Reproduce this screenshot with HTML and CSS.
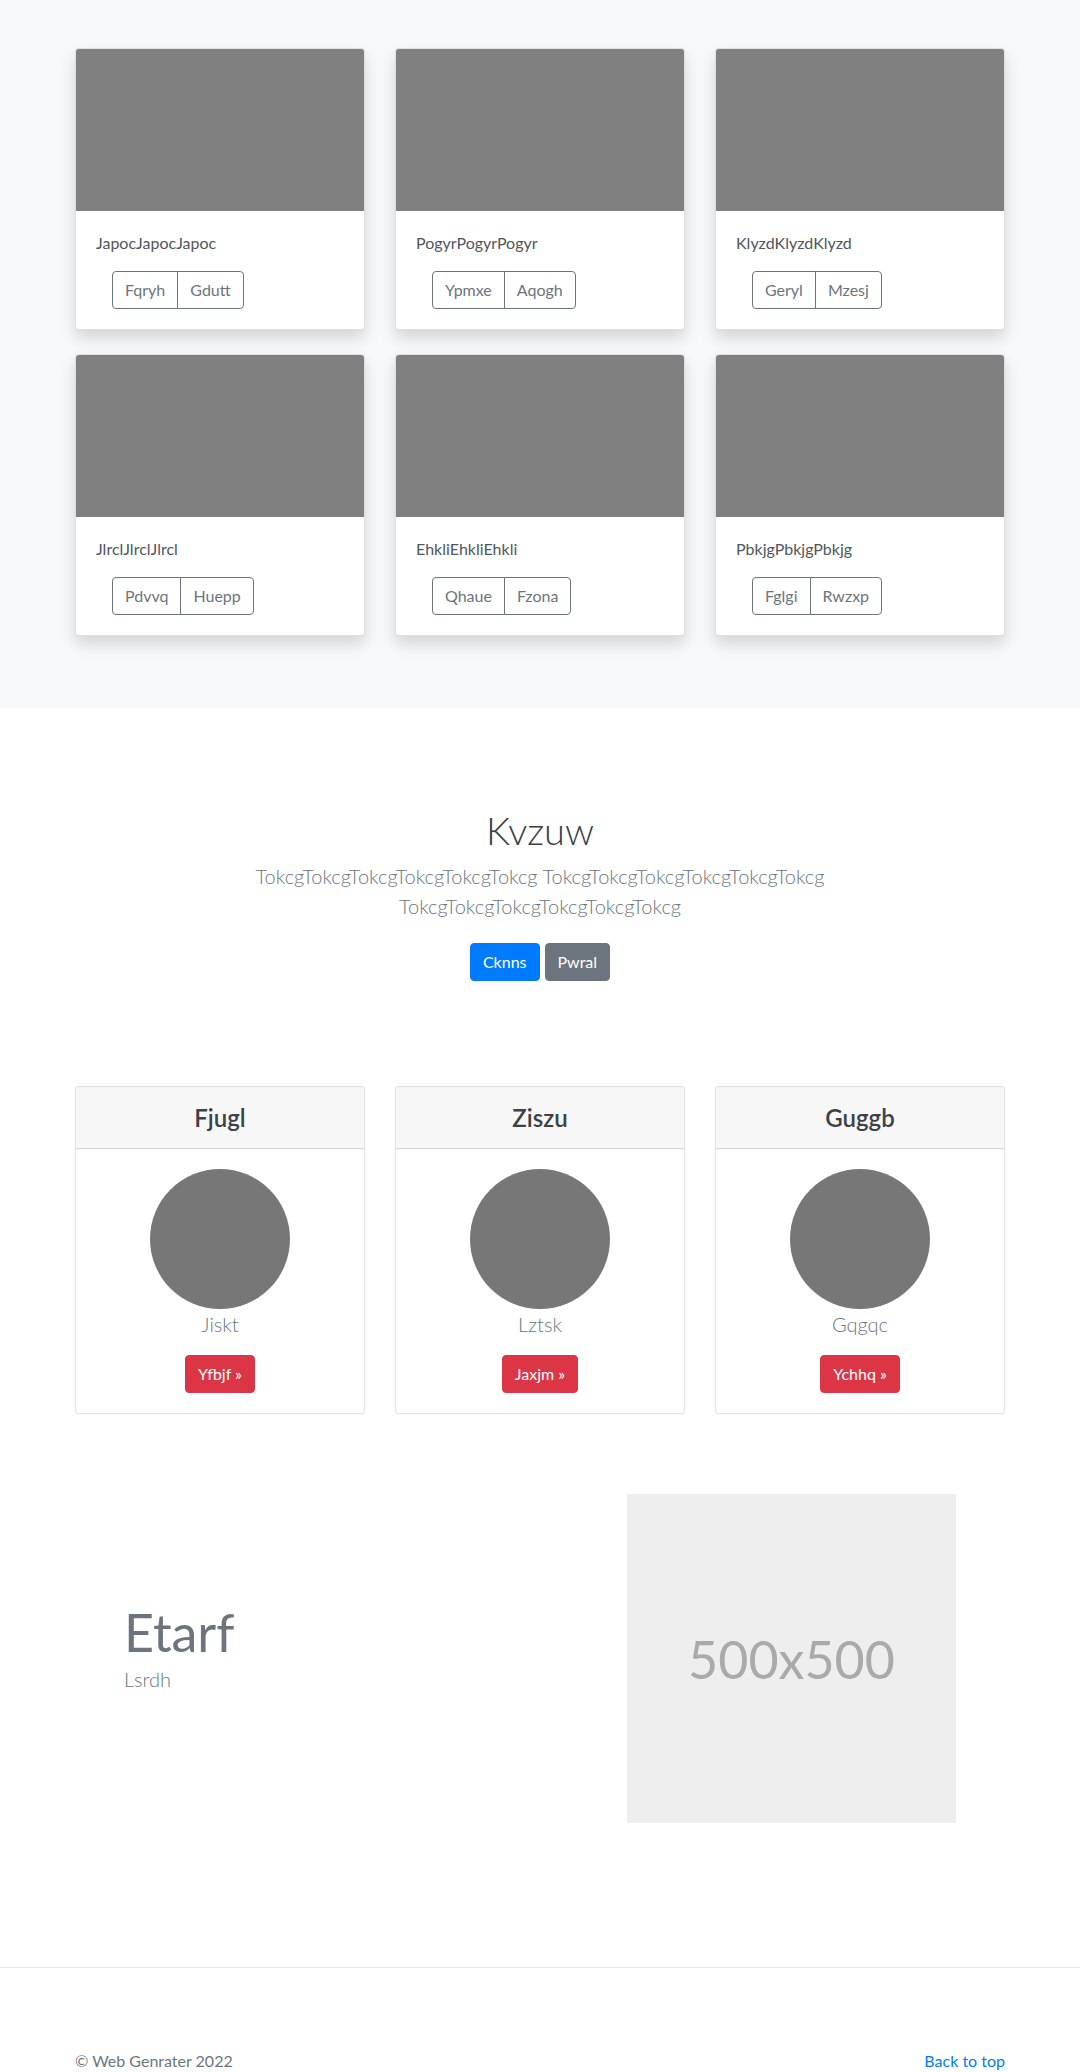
FILE: index.html
```html
<!DOCTYPE html>
<html lang="en">
<head>
<meta charset="utf-8">
<title>Album</title>
<link rel="stylesheet" href="styles.css">
</head>
<body>
<main>
  <section class="album">
    <div class="container grid3 album-grid">
      <div class="card shadow-card">
        <div class="card-img"></div>
        <div class="card-body">
          <p class="card-text">JapocJapocJapoc</p>
          <div class="btn-group"><span class="btn btn-outline">Fqryh</span><span class="btn btn-outline">Gdutt</span></div>
        </div>
      </div>
      <div class="card shadow-card">
        <div class="card-img"></div>
        <div class="card-body">
          <p class="card-text">PogyrPogyrPogyr</p>
          <div class="btn-group"><span class="btn btn-outline">Ypmxe</span><span class="btn btn-outline">Aqogh</span></div>
        </div>
      </div>
      <div class="card shadow-card">
        <div class="card-img"></div>
        <div class="card-body">
          <p class="card-text">KlyzdKlyzdKlyzd</p>
          <div class="btn-group"><span class="btn btn-outline">Geryl</span><span class="btn btn-outline">Mzesj</span></div>
        </div>
      </div>
      <div class="card shadow-card">
        <div class="card-img"></div>
        <div class="card-body">
          <p class="card-text">JlrclJlrclJlrcl</p>
          <div class="btn-group"><span class="btn btn-outline">Pdvvq</span><span class="btn btn-outline">Huepp</span></div>
        </div>
      </div>
      <div class="card shadow-card">
        <div class="card-img"></div>
        <div class="card-body">
          <p class="card-text">EhkliEhkliEhkli</p>
          <div class="btn-group"><span class="btn btn-outline">Qhaue</span><span class="btn btn-outline">Fzona</span></div>
        </div>
      </div>
      <div class="card shadow-card">
        <div class="card-img"></div>
        <div class="card-body">
          <p class="card-text">PbkjgPbkjgPbkjg</p>
          <div class="btn-group"><span class="btn btn-outline">Fglgi</span><span class="btn btn-outline">Rwzxp</span></div>
        </div>
      </div>
    </div>
  </section>

  <section class="hero">
    <h1 class="hero-title">Kvzuw</h1>
    <p class="lead hero-lead">TokcgTokcgTokcgTokcgTokcgTokcg TokcgTokcgTokcgTokcgTokcgTokcg TokcgTokcgTokcgTokcgTokcgTokcg</p>
    <div class="hero-actions">
      <a class="btn btn-primary" href="#">Cknns</a>
      <a class="btn btn-secondary" href="#">Pwral</a>
    </div>
  </section>

  <section class="pricing">
    <div class="container grid3">
      <div class="card">
        <div class="card-header"><h4 class="card-title">Fjugl</h4></div>
        <div class="card-body center">
          <div class="avatar"></div>
          <p class="person">Jiskt</p>
          <a class="btn btn-danger" href="#">Yfbjf &raquo;</a>
        </div>
      </div>
      <div class="card">
        <div class="card-header"><h4 class="card-title">Ziszu</h4></div>
        <div class="card-body center">
          <div class="avatar"></div>
          <p class="person">Lztsk</p>
          <a class="btn btn-danger" href="#">Jaxjm &raquo;</a>
        </div>
      </div>
      <div class="card">
        <div class="card-header"><h4 class="card-title">Guggb</h4></div>
        <div class="card-body center">
          <div class="avatar"></div>
          <p class="person">Gqgqc</p>
          <a class="btn btn-danger" href="#">Ychhq &raquo;</a>
        </div>
      </div>
    </div>
  </section>

  <section class="featurette">
    <div class="container feat-row">
      <div class="feat-text">
        <h2 class="feat-title">Etarf</h2>
        <p class="lead feat-lead">Lsrdh</p>
      </div>
      <div class="feat-media">
        <div class="placeholder">500x500</div>
      </div>
    </div>
  </section>
</main>

<footer class="footer">
  <div class="container footer-row">
    <p class="footer-copy">&copy; Web Genrater 2022</p>
    <a class="footer-link" href="#">Back to top</a>
  </div>
</footer>
</body>
</html>
```

FILE: styles.css
```css
* { box-sizing: border-box; }

html, body {
  margin: 0;
  padding: 0;
}

body {
  font-family: "Lato", "Noto Sans", "Liberation Sans", sans-serif;
  font-size: 16px;
  line-height: 1.5;
  color: #212529;
  background: #fff;
}

a { text-decoration: none; }

.container {
  width: 960px;
  margin: 0 auto;
  padding: 0 15px;
}

.grid3 {
  display: grid;
  grid-template-columns: repeat(3, 290px);
  column-gap: 30px;
}

/* ---------- album ---------- */
.album {
  background: #f8f9fa;
  padding: 48px 0 48px;
}

.album-grid {
  row-gap: 0;
}

.card {
  background: #fff;
  border: 1px solid rgba(0, 0, 0, 0.125);
  border-radius: 4px;
  display: flex;
  flex-direction: column;
}

.shadow-card {
  margin-bottom: 24px;
  box-shadow: 0 8px 16px rgba(0, 0, 0, 0.15);
}

.card-img {
  height: 162px;
  background: #808080;
  border-radius: 3px 3px 0 0;
}

.card-body {
  padding: 20px;
}

.card-text {
  margin: 0 0 16px;
  color: #50565c;
}

.btn-group {
  display: inline-flex;
  margin-left: 16px;
}

.btn {
  display: inline-block;
  padding: 6px 12px;
  font-size: 16px;
  line-height: 24px;
  border: 1px solid transparent;
  border-radius: 4px;
  text-align: center;
}

.btn-outline {
  color: #6c757d;
  border-color: #6c757d;
  background: transparent;
}

.btn-group .btn-outline:first-child {
  border-top-right-radius: 0;
  border-bottom-right-radius: 0;
}

.btn-group .btn-outline + .btn-outline {
  margin-left: -1px;
  border-top-left-radius: 0;
  border-bottom-left-radius: 0;
}

.btn-primary { background: #007bff; border-color: #007bff; color: #fff; }
.btn-secondary { background: #6c757d; border-color: #6c757d; color: #fff; }
.btn-danger { background: #dc3545; border-color: #dc3545; color: #fff; }

/* ---------- hero ---------- */
.hero {
  text-align: center;
  padding: 98px 0 105px;
}

.hero-title {
  margin: 0 0 8px;
  font-size: 38px;
  font-weight: 300;
  line-height: 46px;
  padding-top: 1px;
  color: #3a3f44;
}

.lead {
  font-size: 20px;
  font-weight: 300;
  line-height: 1.5;
}

.hero-lead {
  width: 610px;
  margin: 0 auto 22px;
  color: #6c757d;
}

.hero-actions {
  display: flex;
  justify-content: center;
  gap: 5px;
}

/* ---------- pricing ---------- */
.card-header {
  background: #f7f7f7;
  border-bottom: 1px solid rgba(0, 0, 0, 0.125);
  padding: 16px 20px;
  text-align: center;
  border-radius: 3px 3px 0 0;
}

.card-title {
  margin: 0;
  font-size: 24px;
  font-weight: 600;
  line-height: 29px;
  color: #3d4247;
}

.center {
  display: flex;
  flex-direction: column;
  align-items: center;
}

.avatar {
  width: 140px;
  height: 140px;
  border-radius: 50%;
  background: #777;
}

.person {
  margin: 0 0 16px;
  font-size: 20px;
  font-weight: 300;
  line-height: 30px;
  color: #6c757d;
}

/* ---------- featurette ---------- */
.featurette {
  padding: 80px 0 144px;
}

.feat-row {
  display: flex;
  align-items: center;
}

.feat-text {
  flex: 1;
  padding-left: 49px;
  padding-bottom: 10px;
}

.feat-title {
  margin: 0;
  font-size: 52px;
  font-weight: 400;
  line-height: 64px;
  padding-top: 2px;
  color: #6c757d;
}

.feat-lead {
  margin: 0 0 16px;
  color: #6c757d;
}

.feat-media {
  width: 480px;
  display: flex;
  justify-content: flex-end;
  padding-right: 49px;
}

.placeholder {
  width: 329px;
  height: 329px;
  background: #eee;
  color: #aaa;
  font-size: 52px;
  display: flex;
  align-items: center;
  justify-content: center;
}

/* ---------- footer ---------- */
.footer {
  border-top: 1px solid #e5e5e5;
  padding: 81px 0 48px;
}

.footer-row {
  display: flex;
  justify-content: space-between;
  align-items: flex-start;
}

.footer-copy {
  margin: 0;
  color: #6c757d;
}

.footer-link {
  color: #007bff;
}
```
